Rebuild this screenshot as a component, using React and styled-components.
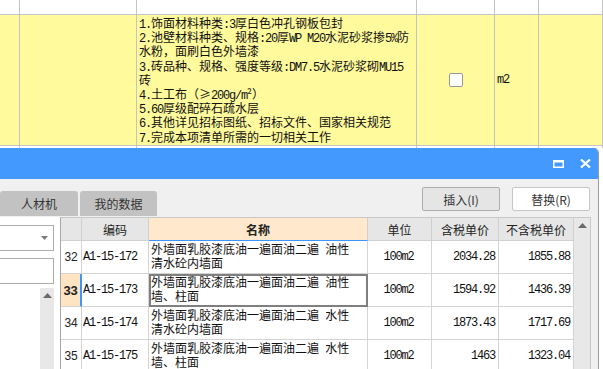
import React from "react";
import styled, { createGlobalStyle } from "styled-components";

const GlobalStyle = createGlobalStyle`
  html, body {
    margin: 0;
    padding: 0;
    background: #ffffff;
  }
  body {
    font-family: "Noto Sans CJK SC", "Noto Sans", sans-serif;
  }
`;

const Page = styled.div`
  width: 603px;
  height: 369px;
  overflow: hidden;
  background: #ffffff;
`;

/* half-width latin run, like the grid font of the original */
const Half = styled.span`
  font-family: "Liberation Mono", monospace;
  letter-spacing: -1.2px;
`;

const Mixed = ({ text }) =>
  text.split(/([\x20-\x7e]+)/).map((part, i) =>
    i % 2 ? <Half key={i}>{part}</Half> : <React.Fragment key={i}>{part}</React.Fragment>
  );

const Line = styled.div`
  height: ${(p) => p.$h}px;
  line-height: ${(p) => p.$h}px;
  white-space: nowrap;
`;

/* ---------- background spreadsheet ---------- */

const Sheet = styled.div`
  height: 148px;
  overflow: hidden;
  display: grid;
  grid-template-columns: 20px 117px 280px 78px 44px 1fr;
  grid-template-rows: 15px 131px 3px;
`;

const SheetCell = styled.div`
  box-sizing: border-box;
  border-right: 1px solid #c4c4c4;
  border-bottom: 1px solid ${(p) => (p.$last ? "transparent" : "#c4c4c4")};
  background: ${(p) => (p.$yellow ? "#fffa9c" : "#ffffff")};
  display: flex;
  align-items: center;
  justify-content: ${(p) => (p.$center ? "center" : "flex-start")};
`;

const DescCell = styled(SheetCell)`
  display: block;
  padding: 1px 0 0 2px;
  font-size: 12px;
  color: #111;
  overflow: hidden;
`;

const UnitText = styled(Half)`
  font-size: 12px;
  color: #111;
  padding-left: 2px;
`;

const CheckBox = styled.span`
  width: 12px;
  height: 12px;
  background: #ffffff;
  border: 1px solid #9a9a9a;
  border-radius: 2px;
`;

/* ---------- dialog window ---------- */

const Dialog = styled.div`
  width: 599px;
  box-sizing: border-box;
  border-right: 1px solid #9c9c9c;
  border-top-right-radius: 5px;
  overflow: hidden;
  background: #f0f0f0;
`;

const TitleBar = styled.div`
  height: 31px;
  background: #4499ff;
  display: flex;
  align-items: center;
  justify-content: flex-end;
  gap: 15px;
  padding-right: 7px;
`;

const IconButton = styled.span`
  display: flex;
  width: 12px;
  height: 12px;
  align-items: center;
  justify-content: center;
`;

const Toolbar = styled.div`
  height: 38px;
  display: flex;
  justify-content: space-between;
  padding-right: 8px;
`;

const Tabs = styled.div`
  display: flex;
  gap: 2px;
  align-items: flex-end;
  padding-bottom: 1px;
`;

const Tab = styled.div`
  width: ${(p) => p.$w}px;
  height: 25px;
  background: #c2c2c2;
  border-radius: 3px 3px 0 0;
  display: flex;
  align-items: center;
  justify-content: center;
  font-size: 12px;
  color: #333;
`;

const Buttons = styled.div`
  display: flex;
  gap: 12px;
  padding-top: 8px;
`;

const Button = styled.div`
  width: 78px;
  height: 24px;
  box-sizing: border-box;
  border: 1px solid ${(p) => (p.$primary ? "#adadad" : "#c6c6c6")};
  border-radius: 2px;
  background: ${(p) => (p.$primary ? "#e5e5e5" : "#ffffff")};
  display: flex;
  align-items: center;
  justify-content: center;
  font-size: 12px;
  color: #333;
`;

const Content = styled.div`
  display: flex;
  height: 160px;
`;

const LeftPanel = styled.div`
  width: 61px;
  background: #ffffff;
  display: flex;
  flex-direction: column;
  padding-top: 8px;
  gap: 7px;
`;

const Field = styled.div`
  width: 55px;
  height: 26px;
  margin-left: -1px;
  box-sizing: border-box;
  border: 1px solid #acacac;
  background: #ffffff;
  display: flex;
  align-items: center;
  justify-content: flex-end;
  padding-right: 5px;
`;

const List = styled.div`
  flex: 1;
  width: 54px;
  display: flex;
  justify-content: flex-end;
  margin-top: -3px;
`;

const ScrollTrack = styled.div`
  width: ${(p) => p.$w}px;
  background: #e8e8e8;
  display: flex;
  justify-content: center;
  padding-top: 5px;
  box-sizing: border-box;
`;

const TableWrap = styled.div`
  display: flex;
  border-left: 1px solid #a6a6a6;
  border-top: 1px solid #c8c8c8;
  background: #ffffff;
`;

const Grid = styled.div`
  display: grid;
  grid-template-columns: 21px 67px 219px 64px 67px 75px;
  grid-auto-rows: 33px;
  grid-template-rows: 23px;
`;

const Head = styled.div`
  box-sizing: border-box;
  border-right: 1px solid #d0d0d0;
  border-bottom: 1px solid ${(p) => (p.$active ? "#3c96ff" : "#d0d0d0")};
  background: ${(p) => (p.$active ? "#ffe8cc" : "#e6e6e6")};
  display: flex;
  align-items: center;
  justify-content: center;
  font-size: 12px;
  font-weight: ${(p) => (p.$active ? 700 : 400)};
  color: #222;
`;

const Cell = styled.div`
  box-sizing: border-box;
  border-right: 1px solid #d4d4d4;
  border-bottom: 1px solid #d4d4d4;
  display: flex;
  align-items: center;
  justify-content: ${(p) => p.$align || "flex-start"};
  padding: 0 3px 0 1px;
  font-family: "Liberation Mono", monospace;
  font-size: 12px;
  letter-spacing: -1.2px;
  color: #111;
  white-space: nowrap;
`;

const RowNum = styled(Cell)`
  justify-content: center;
  padding: 0;
  font-family: "Liberation Sans", Arial, sans-serif;
  letter-spacing: 0;
  font-weight: ${(p) => (p.$current ? 700 : 400)};
  background: ${(p) => (p.$current ? "#ffe4c4" : "#ffffff")};
  border-right: ${(p) => (p.$current ? "2px solid #3c96ff" : "1px solid #d4d4d4")};
  font-size: ${(p) => (p.$current ? "13px" : "12px")};
  color: #222;
`;

const NameCell = styled.div`
  box-sizing: border-box;
  border-right: 1px solid #d4d4d4;
  border-bottom: 1px solid #d4d4d4;
  outline: ${(p) => (p.$selected ? "2px solid #7f7f7f" : "none")};
  outline-offset: -2px;
  padding: 1px 0 0 2px;
  font-size: 12px;
  color: #111;
  overflow: hidden;
`;

const SideGap = styled.div`
  width: 7px;
  border-left: 1px solid #c8c8c8;
  background: #f0f0f0;
`;

const UpArrow = () => (
  <svg width="9" height="5" viewBox="0 0 9 5">
    <path d="M0 5 L4.5 0 L9 5 Z" fill="#6a6a6a" />
  </svg>
);

const DownArrow = () => (
  <svg width="7" height="4" viewBox="0 0 7 4">
    <path d="M0 0 L7 0 L3.5 4 Z" fill="#7a7a7a" />
  </svg>
);

const desc = [
  "1.饰面材料种类:3厚白色冲孔钢板包封",
  "2.池壁材料种类、规格:20厚WP M20水泥砂浆掺5%防",
  "水粉，面刷白色外墙漆",
  "3.砖品种、规格、强度等级:DM7.5水泥砂浆砌MU15",
  "砖",
  "4.土工布（≥200g/m²）",
  "5.60厚级配碎石疏水层",
  "6.其他详见招标图纸、招标文件、国家相关规范",
  "7.完成本项清单所需的一切相关工作",
];

const rows = [
  { n: 32, code: "A1-15-172", name: ["外墙面乳胶漆底油一遍面油二遍 油性", "清水砼内墙面"], price: "2034.28", net: "1855.88" },
  { n: 33, code: "A1-15-173", name: ["外墙面乳胶漆底油一遍面油二遍 油性", "墙、柱面"], price: "1594.92", net: "1436.39", current: true },
  { n: 34, code: "A1-15-174", name: ["外墙面乳胶漆底油一遍面油二遍 水性", "清水砼内墙面"], price: "1873.43", net: "1717.69" },
  { n: 35, code: "A1-15-175", name: ["外墙面乳胶漆底油一遍面油二遍 水性", "墙、柱面"], price: "1463", net: "1323.04" },
];

const App = () => {
  return (
    <Page>
      <GlobalStyle />
      <Sheet>
        {[0, 1, 2, 3, 4, 5].map((i) => (
          <SheetCell key={"h" + i} />
        ))}
        <SheetCell $yellow />
        <SheetCell $yellow />
        <DescCell $yellow>
          {desc.map((line) => (
            <Line key={line} $h={14.2}>
              <Mixed text={line} />
            </Line>
          ))}
        </DescCell>
        <SheetCell $yellow $center>
          <CheckBox />
        </SheetCell>
        <SheetCell $yellow>
          <UnitText>m2</UnitText>
        </SheetCell>
        <SheetCell $yellow />
        {[0, 1, 2, 3, 4, 5].map((i) => (
          <SheetCell key={"f" + i} $last />
        ))}
      </Sheet>

      <Dialog>
        <TitleBar>
          <IconButton>
            <svg width="11" height="8" viewBox="0 0 11 8">
              <rect x="0.75" y="1.25" width="9.5" height="6" fill="none" stroke="#fff" strokeWidth="1.5" />
              <rect x="0" y="0" width="11" height="2.5" fill="#fff" />
            </svg>
          </IconButton>
          <IconButton>
            <svg width="11" height="9" viewBox="0 0 11 9">
              <path d="M1 0.5 L10 8.5 M10 0.5 L1 8.5" stroke="#fff" strokeWidth="2.2" />
            </svg>
          </IconButton>
        </TitleBar>

        <Toolbar>
          <Tabs>
            <Tab $w={78}>人材机</Tab>
            <Tab $w={77}>我的数据</Tab>
          </Tabs>
          <Buttons>
            <Button $primary>插入(I)</Button>
            <Button>替换(R)</Button>
          </Buttons>
        </Toolbar>

        <Content>
          <LeftPanel>
            <Field>
              <DownArrow />
            </Field>
            <Field />
            <List>
              <ScrollTrack $w={14}>
                <UpArrow />
              </ScrollTrack>
            </List>
          </LeftPanel>

          <TableWrap>
            <Grid>
              <Head />
              <Head>编码</Head>
              <Head $active>名称</Head>
              <Head>单位</Head>
              <Head>含税单价</Head>
              <Head>不含税单价</Head>
              {rows.map((r) => (
                <React.Fragment key={r.n}>
                  <RowNum $current={r.current}>{r.n}</RowNum>
                  <Cell>{r.code}</Cell>
                  <NameCell $selected={r.current}>
                    <Line $h={14.3}>
                      <Mixed text={r.name[0]} />
                    </Line>
                    <Line $h={14.3}>{r.name[1]}</Line>
                  </NameCell>
                  <Cell $align="center">100m2</Cell>
                  <Cell $align="flex-end">{r.price}</Cell>
                  <Cell $align="flex-end">{r.net}</Cell>
                </React.Fragment>
              ))}
            </Grid>
            <ScrollTrack $w={16}>
              <UpArrow />
            </ScrollTrack>
          </TableWrap>
          <SideGap />
        </Content>
      </Dialog>
    </Page>
  );
};

export default App;
